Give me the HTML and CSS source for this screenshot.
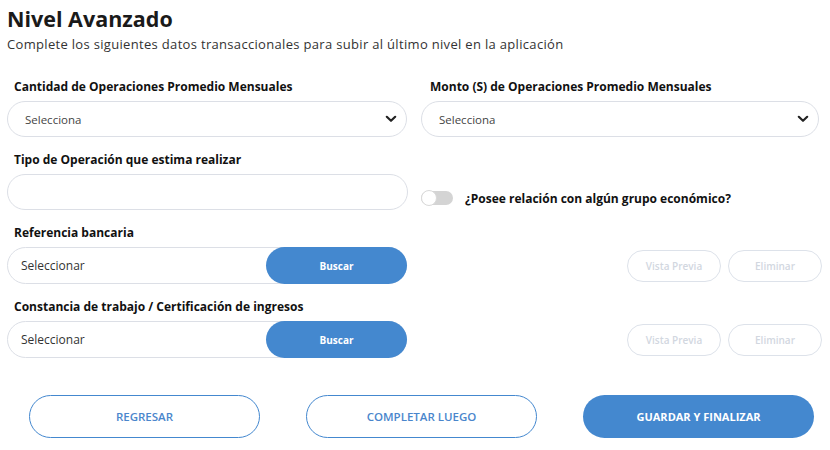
FILE: index.html
```html
<!DOCTYPE html>
<html lang="es">
<head>
<meta charset="utf-8">
<link rel="stylesheet" href="styles.css">
</head>
<body>
<div class="page">
  <h1 class="title">Nivel Avanzado</h1>
  <p class="subtitle">Complete los siguientes datos transaccionales para subir al último nivel en la aplicación</p>

  <div class="grid">
    <div class="field">
      <div class="label">Cantidad de Operaciones Promedio Mensuales</div>
      <div class="select"><span>Selecciona</span>
        <svg class="chev" width="12" height="8" viewBox="0 0 12 8"><path d="M1.8 1.8 L6 5.8 L10.2 1.8" fill="none" stroke="#222" stroke-width="2.2" stroke-linecap="round" stroke-linejoin="round"/></svg>
      </div>
    </div>
    <div class="field">
      <div class="label label-r">Monto (S) de Operaciones Promedio Mensuales</div>
      <div class="select"><span>Selecciona</span>
        <svg class="chev" width="12" height="8" viewBox="0 0 12 8"><path d="M1.8 1.8 L6 5.8 L10.2 1.8" fill="none" stroke="#222" stroke-width="2.2" stroke-linecap="round" stroke-linejoin="round"/></svg>
      </div>
    </div>

    <div class="field">
      <div class="label">Tipo de Operación que estima realizar</div>
      <div class="input wide"></div>
    </div>
    <div class="side toggle-side">
      <span class="toggle"><span class="knob"></span></span>
      <span class="toggle-label">¿Posee relación con algún grupo económico?</span>
    </div>

    <div class="field">
      <div class="label">Referencia bancaria</div>
      <div class="file"><span class="file-text">Seleccionar</span><span class="buscar">Buscar</span></div>
    </div>
    <div class="side actions">
      <span class="ghost">Vista Previa</span>
      <span class="ghost">Eliminar</span>
    </div>

    <div class="field">
      <div class="label">Constancia de trabajo / Certificación de ingresos</div>
      <div class="file"><span class="file-text">Seleccionar</span><span class="buscar">Buscar</span></div>
    </div>
    <div class="side actions">
      <span class="ghost">Vista Previa</span>
      <span class="ghost">Eliminar</span>
    </div>
  </div>

  <div class="footer">
    <span class="btn outline">REGRESAR</span>
    <span class="btn outline">COMPLETAR LUEGO</span>
    <span class="btn solid">GUARDAR Y FINALIZAR</span>
  </div>
</div>
</body>
</html>
```

FILE: styles.css
```css
* { box-sizing: border-box; }
html, body { margin: 0; padding: 0; background: #fff; }
body { font-family: "Open Sans", "Liberation Sans", sans-serif; color: #111; }

.page { padding: 6px 0 0 7px; width: 830px; }

.title {
  margin: 0;
  font-size: 21.5px;
  line-height: 26px;
  font-weight: 700;
  color: #1a1a1a;
}
.subtitle {
  margin: 3px 0 0;
  font-size: 13px;
  letter-spacing: 0.32px;
  line-height: 18px;
  color: #333;
}

.grid {
  margin-top: 26px;
  display: grid;
  grid-template-columns: 400px 398px;
  column-gap: 14px;
  row-gap: 15px;
}

.field { display: flex; flex-direction: column; }
.label {
  font-size: 12px;
  font-weight: 700;
  line-height: 16px;
  padding-left: 7px;
  margin-bottom: 6px;
  color: #111;
}
.label-r { padding-left: 9px; }

.select {
  height: 36px;
  border: 1px solid #dcdfe6;
  border-radius: 18px;
  display: flex;
  align-items: center;
  justify-content: space-between;
  padding: 0 9px 0 17px;
  font-size: 11.5px;
  color: #444;
}
.chev { display: block; }

.input {
  height: 36px;
  border: 1px solid #dcdfe6;
  border-radius: 18px;
}
.input.wide { width: 401px; }

.side { display: flex; align-items: center; }
.toggle-side { padding-top: 34px; gap: 12px; }
.toggle {
  position: relative;
  width: 32px;
  height: 14px;
  border-radius: 7px;
  background: #d4d4d4;
  flex: none;
}
.knob {
  position: absolute;
  left: 0;
  top: -1px;
  width: 16px;
  height: 16px;
  border-radius: 50%;
  background: #fff;
  border: 1px solid #d9d9d9;
}
.toggle-label {
  font-size: 12px;
  font-weight: 700;
  color: #111;
}

.file {
  height: 37px;
  border: 1px solid #dcdfe6;
  border-radius: 19px;
  display: flex;
  align-items: center;
  justify-content: space-between;
  font-size: 12px;
  color: #333;
}
.file-text { padding-left: 13px; }
.buscar {
  width: 141px;
  height: 37px;
  margin-right: -1px;
  border-radius: 19px;
  background: #4488cf;
  color: #fff;
  font-weight: 700;
  font-size: 10px;
  display: flex;
  align-items: center;
  justify-content: center;
}

.actions {
  justify-content: flex-end;
  gap: 7px;
  padding-top: 22px;
  margin-right: -3px;
}
.ghost {
  width: 94px;
  height: 32px;
  border: 1px solid #dde2ea;
  border-radius: 16px;
  color: #d2d7df;
  font-size: 10px;
  font-weight: 600;
  display: flex;
  align-items: center;
  justify-content: center;
}

.footer {
  display: flex;
  gap: 46px;
  margin-top: 37px;
  padding-left: 22px;
}
.btn {
  width: 231px;
  height: 43px;
  border-radius: 22px;
  display: flex;
  align-items: center;
  justify-content: center;
  font-size: 11.5px;
  font-weight: 600;
}
.btn.outline { border: 1.5px solid #4488cf; color: #4a86cc; }
.btn.solid { background: #4488cf; color: #fff; font-weight: 700; font-size: 11px; }
```
